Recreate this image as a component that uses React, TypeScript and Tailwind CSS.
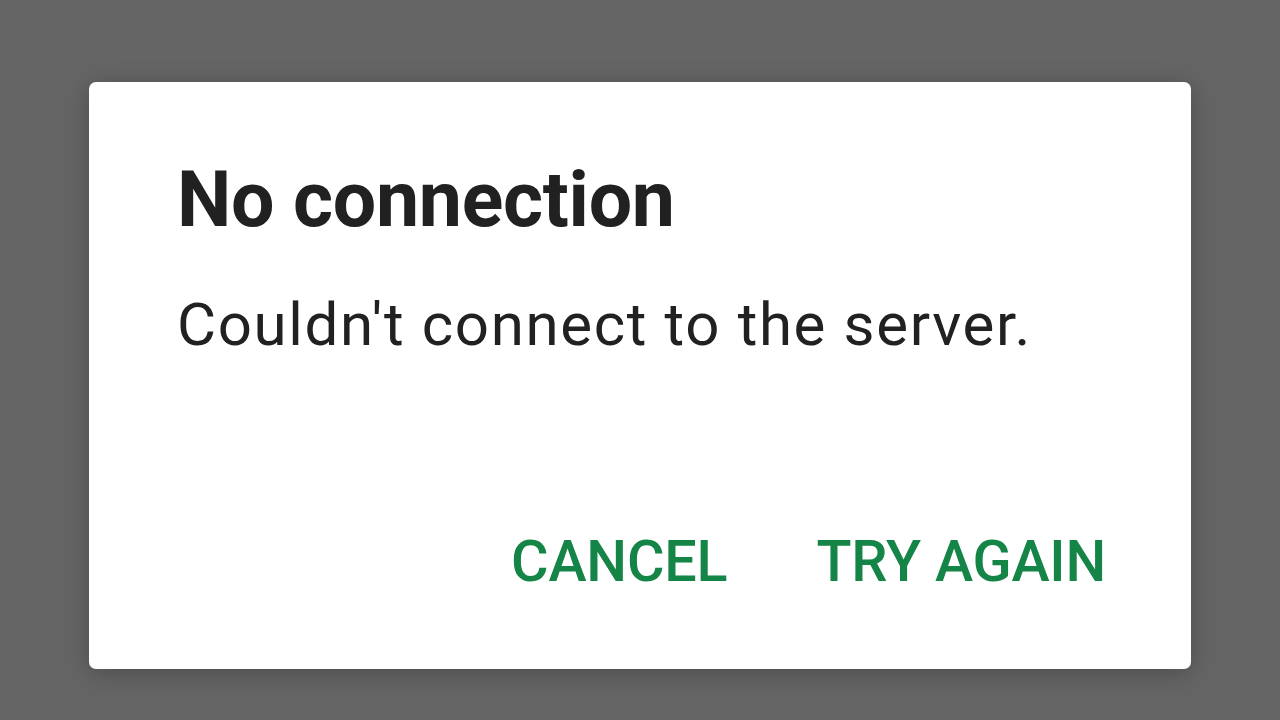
export default function App() {
  return (
    <div
      className="w-[1280px] h-[720px] bg-[#656565] flex items-start justify-center pt-[82px]"
      style={{ fontFamily: 'Roboto, "Noto Sans", sans-serif' }}
    >
      <div className="w-[1102px] h-[587px] bg-white rounded-[7px] shadow-[0_4px_24px_rgba(0,0,0,0.25)] flex flex-col pl-[88px] pr-[85px]">
        <h1 className="mt-[80px] text-[77px] leading-[77px] font-bold text-[#212121] tracking-[-0.3px]">No connection</h1>
        <p className="mt-[56px] text-[60px] leading-[60px] text-[#212121] tracking-[1.65px]">Couldn't connect to the server.</p>
        <div className="mt-auto mb-[78px] flex justify-end gap-[89px]">
          <button className="text-[57.5px] leading-[58px] font-medium text-[#148447] tracking-[-0.2px]">CANCEL</button>
          <button className="text-[57.5px] leading-[58px] font-medium text-[#148447] tracking-[-0.2px]">TRY AGAIN</button>
        </div>
      </div>
    </div>
  );
}
